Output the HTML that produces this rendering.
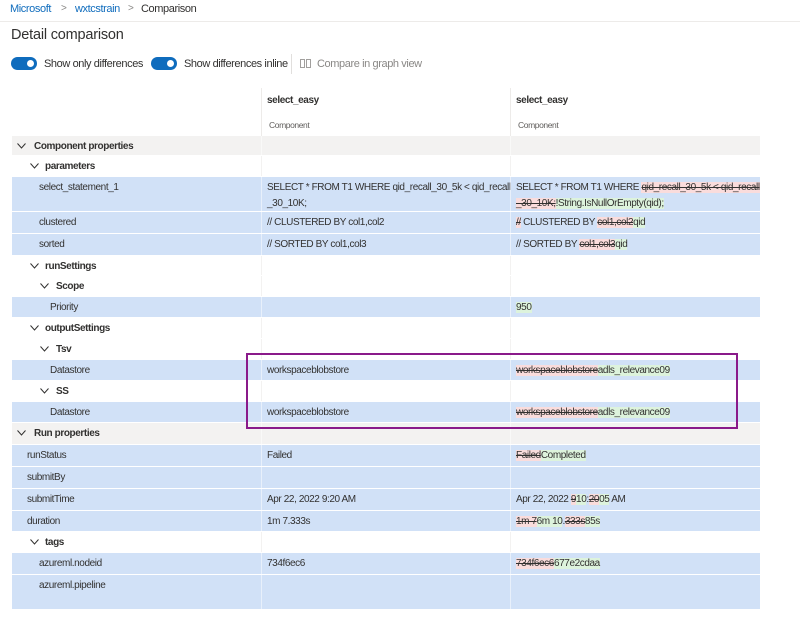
<!DOCTYPE html>
<html><head><meta charset="utf-8"><style>
body{margin:0;width:800px;height:620px;background:#fff;font-family:"Liberation Sans",sans-serif;font-size:10px;letter-spacing:-0.4px;color:#323130;position:relative;overflow:hidden}
.a{position:absolute;white-space:nowrap}
.r{position:absolute;left:12px;width:748px}
.b{background:#d1e1f7}
.g{background:#f3f2f1}
.t{position:absolute;top:0;line-height:21px;white-space:nowrap}
.bold{font-weight:bold}
.del{background:#fadcdc;text-decoration:line-through}
.ins{background:#ddf3dc}
.chev{position:absolute;top:7px;width:9px;height:6px}
.tg{position:absolute;width:26px;height:13px;border-radius:7px;background:#0f6cbd}
.tg:after{content:"";position:absolute;right:3px;top:3px;width:7px;height:7px;border-radius:50%;background:#fff}
</style></head><body>
<div class="a" style="left:10px;top:3px;font-size:11px;color:#0f6cbd">Microsoft</div>
<div class="a" style="left:61px;top:3px;font-size:10px;color:#8a8886">&gt;</div>
<div class="a" style="left:75px;top:3px;font-size:11px;color:#0f6cbd">wxtcstrain</div>
<div class="a" style="left:128px;top:3px;font-size:10px;color:#8a8886">&gt;</div>
<div class="a" style="left:141px;top:3px;font-size:11px">Comparison</div>
<div class="a" style="left:0;top:21px;width:800px;height:1px;background:#edebe9"></div>
<div class="a" style="left:11px;top:27px;font-size:14.5px;letter-spacing:-0.2px">Detail comparison</div>
<div class="tg" style="left:11px;top:57px"></div>
<div class="a" style="left:44px;top:58px;font-size:11px">Show only differences</div>
<div class="tg" style="left:151px;top:57px"></div>
<div class="a" style="left:184px;top:58px;font-size:11px">Show differences inline</div>
<div class="a" style="left:291px;top:54px;width:1px;height:20px;background:#e1dfdd"></div>
<svg class="a" style="left:300px;top:59px" width="11" height="9"><rect x="0.5" y="0.5" width="4" height="8" fill="none" stroke="#a19f9d"/><rect x="6.5" y="0.5" width="4" height="8" fill="none" stroke="#a19f9d"/></svg>
<div class="a" style="left:317px;top:58px;font-size:11px;color:#8a8886">Compare in graph view</div>
<div class="a" style="left:261px;top:88px;width:1px;height:48px;background:#edebe9"></div>
<div class="a" style="left:510px;top:88px;width:1px;height:48px;background:#edebe9"></div>
<div class="a bold" style="left:267px;top:95px">select_easy</div>
<div class="a bold" style="left:516px;top:95px">select_easy</div>
<div class="a" style="left:269px;top:120px;font-size:8.5px;color:#605e5c">Component</div>
<div class="a" style="left:518px;top:120px;font-size:8.5px;color:#605e5c">Component</div>

<div id="rows"></div>
<script>
const C=(x)=>`<svg class="chev" style="left:${x}px" viewBox="0 0 9 6"><polyline points="0.5,0.5 4.5,5 8.5,0.5" fill="none" stroke="#323130" stroke-width="1"/></svg>`;
const rows=[
[136,20,'g',0,'Component properties','',''],
[156,21,'',1,'parameters','',''],
[177,35,'b',-1,'select_statement_1','SELECT * FROM T1 WHERE qid_recall_30_5k &lt; qid_recall<br>_30_10K;','SELECT * FROM T1 WHERE <span class="del">qid_recall_30_5k &lt; qid_recall</span><br><span class="del">_30_10K;</span><span class="ins">!String.IsNullOrEmpty(qid);</span>',27],
[212,22,'b',-1,'clustered','// CLUSTERED BY col1,col2','<span class="del">//</span> CLUSTERED BY <span class="del">col1,col2</span><span class="ins">qid</span>',27],
[234,22,'b',-1,'sorted','// SORTED BY col1,col3','// SORTED BY <span class="del">col1,col3</span><span class="ins">qid</span>',27],
[256,20,'',1,'runSettings','',''],
[276,21,'',2,'Scope','',''],
[297,21,'b',-1,'Priority','','<span class="ins">950</span>',38],
[318,21,'',1,'outputSettings','',''],
[339,21,'',2,'Tsv','',''],
[360,21,'b',-1,'Datastore','workspaceblobstore','<span class="del">workspaceblobstore</span><span class="ins">adls_relevance09</span>',38],
[381,21,'',2,'SS','',''],
[402,21,'b',-1,'Datastore','workspaceblobstore','<span class="del">workspaceblobstore</span><span class="ins">adls_relevance09</span>',38],
[423,22,'g',0,'Run properties','',''],
[445,22,'b',-1,'runStatus','Failed','<span class="del">Failed</span><span class="ins">Completed</span>',15],
[467,22,'b',-1,'submitBy','','',15],
[489,22,'b',-1,'submitTime','Apr 22, 2022 9:20 AM','Apr 22, 2022 <span class="del">9</span><span class="ins">10</span>:<span class="del">20</span><span class="ins">05</span> AM',15],
[511,21,'b',-1,'duration','1m 7.333s','<span class="del">1m 7</span><span class="ins">6m 10</span>.<span class="del">333s</span><span class="ins">85s</span>',15],
[532,21,'',1,'tags','',''],
[553,22,'b',-1,'azureml.nodeid','734f6ec6','<span class="del">734f6ec6</span><span class="ins">677e2cdaa</span>',27],
[575,35,'b',-1,'azureml.pipeline','','',27],
];
let h='';
for(const r of rows){
 const [top,ht,cls,lvl,label,c2,c3,lx]=r;
 h+=`<div class="r ${cls}" style="top:${top}px;height:${ht-1}px">`;
 if(lvl>=0){
  const cx=[5,18,28][lvl], tx=[22,33,44][lvl];
  h+=C(cx)+`<div class="t bold" style="left:${tx}px">${label}</div>`;
 } else {
  h+=`<div class="t" style="left:${lx}px">${label}</div>`;
 }
 const st=ht>30?'line-height:16px;top:3px':'';
 h+=`<div class="t" style="left:255px;${st}">${c2}</div>`;
 h+=`<div class="t" style="left:504px;${st}">${c3}</div>`;
 h+=`<div style="position:absolute;left:249px;top:0;width:1px;height:100%;background:${cls?'rgba(255,255,255,.5)':'#f3f2f1'}"></div>`;
 h+=`<div style="position:absolute;left:498px;top:0;width:1px;height:100%;background:${cls?'rgba(255,255,255,.5)':'#f3f2f1'}"></div>`;
 h+=`</div>`;
}
document.getElementById('rows').innerHTML=h;
</script>
<div class="a" style="left:246px;top:353px;width:488px;height:72px;border:2px solid #8a1a8a"></div>
</body></html>
